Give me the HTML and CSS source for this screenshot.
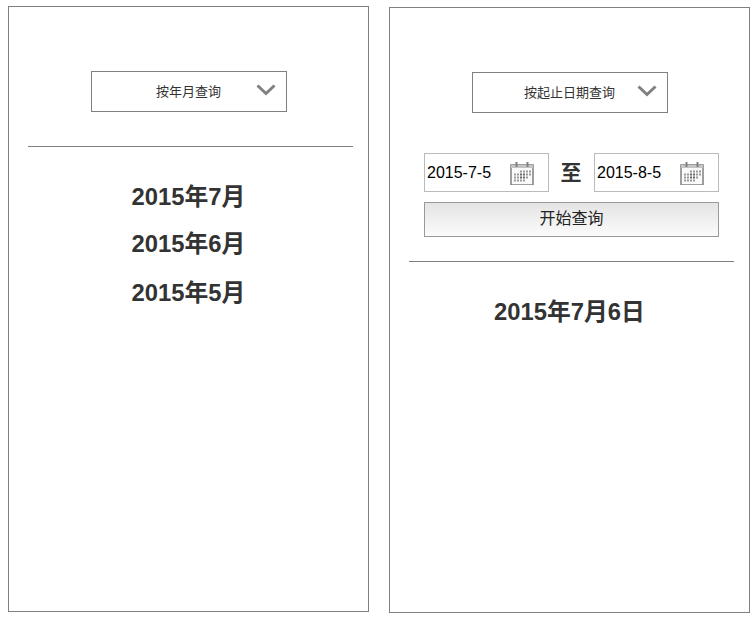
FILE: index.html
```html
<!DOCTYPE html>
<html lang="zh-CN">
<head>
    <meta charset="UTF-8">
    <title>查询</title>
    <link rel="stylesheet" href="styles.css">
</head>
<body>
    <svg class="icon-defs" width="0" height="0">
        <symbol id="icon-calendar" viewBox="0 0 24 24">
            <path d="M1 4h22v20H1z" fill="#fafafa" stroke="#808080" stroke-width="1.500"/>
            <path d="M1 4h22v3H1z" fill="#c4c4c4"/>
            <path d="M6.500 1v5M17.500 1v5" stroke="#808080" stroke-width="2"/>
            <path d="M10 9.500h2v2h-2zM13 9.500h2v2h-2zM16 9.500h2v2h-2zM19 9.500h2v2h-2zM4 12.500h2v2H4zM7 12.500h2v2H7z" fill="#999"/>
            <path d="M10 12.500h2v2h-2zM13 12.500h2v2h-2zM10 15.500h2v2h-2zM13 15.500h2v2h-2z" fill="#666"/>
            <path d="M16 12.500h2v2h-2zM19 12.500h2v2h-2zM4 15.500h2v2H4zM7 15.500h2v2H7zM16 15.500h2v2h-2zM4 18.500h2v2H4zM7 18.500h2v2H7zM10 18.500h2v2h-2zM13 18.500h2v2h-2z" fill="#999"/>
        </symbol>
    </svg>

    <!-- Query by month -->
    <div class="panel">
        <div class="select-wrap">
            <div class="select">
                <span>按年月查询</span>
                <svg class="arrow" width="20" height="12" viewBox="0 0 20 12"><path d="M1.500 1.500 10 9.500l8.500-8" fill="none" stroke="#808080" stroke-width="3"/></svg>
            </div>
        </div>
        <div class="divider divider-month"></div>
        <ul class="results">
            <li>2015年7月</li>
            <li>2015年6月</li>
            <li class="last-month">2015年5月</li>
        </ul>
    </div>

    <!-- Query by date range -->
    <div class="panel panel-range">
        <div class="select-wrap">
            <div class="select">
                <span>按起止日期查询</span>
                <svg class="arrow" width="20" height="12" viewBox="0 0 20 12"><path d="M1.500 1.500 10 9.500l8.500-8" fill="none" stroke="#808080" stroke-width="3"/></svg>
            </div>
        </div>
        <div class="range">
            <div class="date-row">
                <div class="date-box">
                    <span>2015-7-5</span>
                    <svg class="calendar" width="24" height="24"><use href="#icon-calendar"/></svg>
                </div>
                <span class="to">至</span>
                <div class="date-box">
                    <span>2015-8-5</span>
                    <svg class="calendar" width="24" height="24"><use href="#icon-calendar"/></svg>
                </div>
            </div>
            <button class="query-btn">开始查询</button>
        </div>
        <div class="divider divider-range"></div>
        <ul class="results">
            <li>2015年7月6日</li>
        </ul>
    </div>
</body>
</html>
```

FILE: styles.css
```css
/* General Styles */
body {
    font-family: 'Liberation Sans', 'Noto Sans CJK SC', sans-serif;
    margin: 0;
    padding: 6px 0 0 8px;
    display: flex;
    gap: 20px;
    background: white;
    color: #333;
}

.icon-defs {
    position: absolute;
}

/* Panel */
.panel {
    box-sizing: border-box;
    width: 361px;
    height: 606px;
    border: 1px solid #808080;
    padding-top: 64px;
}

.panel-range {
    margin-top: 1px;
}

/* Select */
.select-wrap {
    display: flex;
    justify-content: center;
}

.select {
    position: relative;
    box-sizing: border-box;
    width: 196px;
    height: 41px;
    border: 1px solid #808080;
    display: flex;
    align-items: center;
    justify-content: center;
    font-size: 13px;
    padding-bottom: 2px;
}

.arrow {
    position: absolute;
    right: 10px;
    top: 12px;
}

/* Divider */
.divider {
    height: 1px;
    background: #808080;
    margin-left: 19px;
    width: 325px;
}

.divider-month {
    margin-top: 34px;
}

.divider-range {
    margin-top: 24px;
}

/* Date range */
.range {
    margin: 40px 30px 0 34px;
}

.date-row {
    display: flex;
    align-items: center;
    justify-content: space-between;
}

.date-box {
    box-sizing: border-box;
    width: 125px;
    height: 39px;
    border: 1px solid #bbb;
    display: flex;
    align-items: center;
    justify-content: space-between;
    padding: 0 14px 0 2px;
    font-size: 16px;
    color: #000;
}

.to {
    font-size: 21px;
    font-weight: bold;
    padding: 0 1px 4px 0;
}

.query-btn {
    display: block;
    box-sizing: border-box;
    width: 100%;
    height: 35px;
    margin-top: 10px;
    border: 1px solid #999;
    background: linear-gradient(#e4e4e4, #fbfbfb);
    font-family: inherit;
    font-size: 16px;
    color: #222;
    padding: 0 0 5px;
}

/* Results */
.results {
    list-style: none;
    margin: 26px 0 0;
    padding: 0;
    text-align: center;
    font-size: 23.8px;
    font-weight: bold;
    line-height: 47px;
}

.last-month {
    margin-top: 2px;
}
```
